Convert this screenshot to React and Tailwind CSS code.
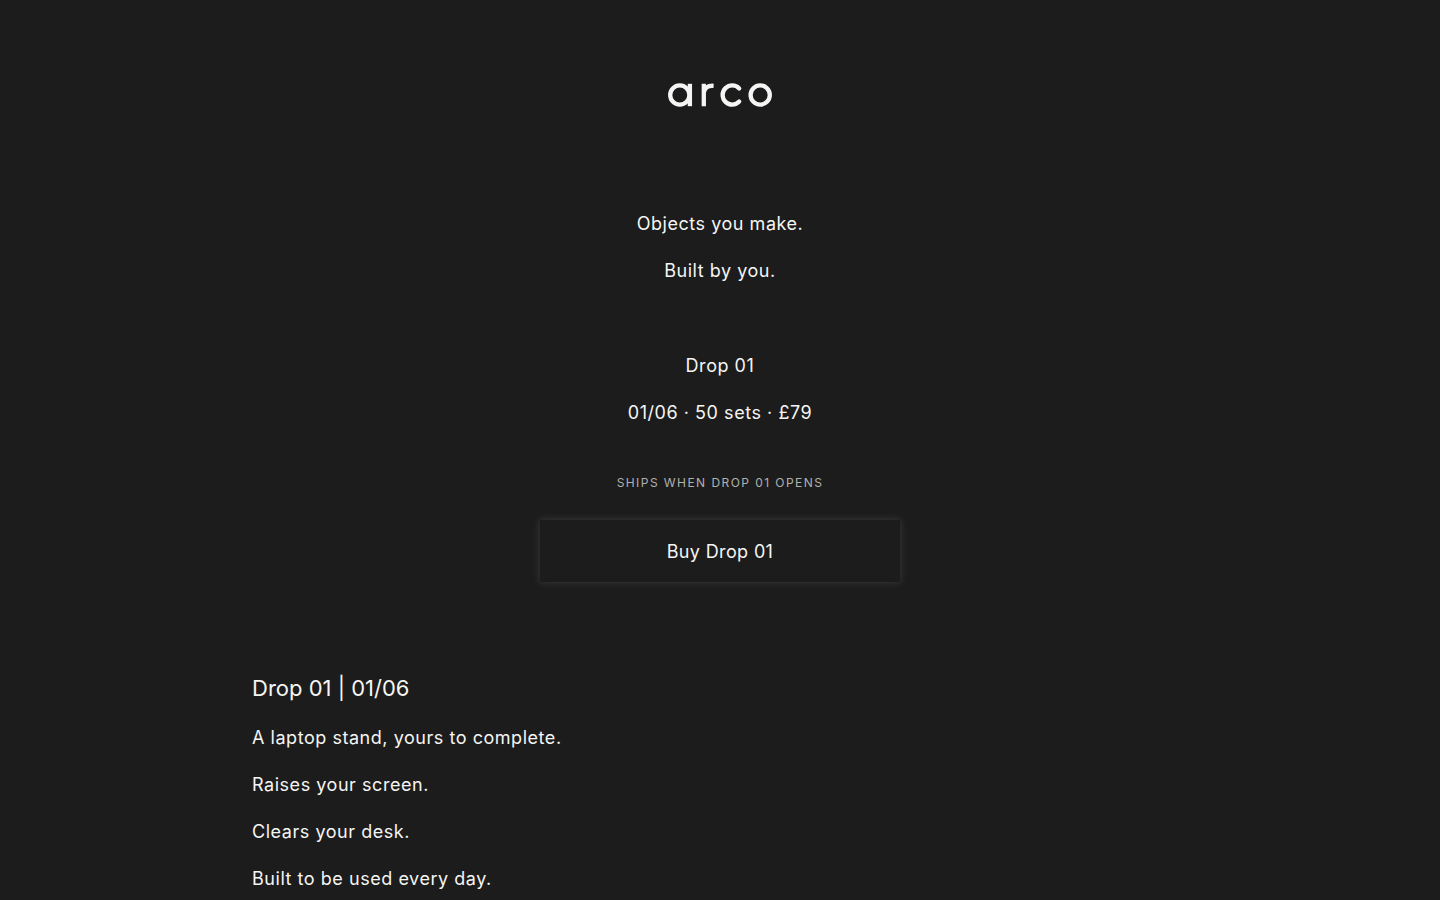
function Logo() {
  return (
    <svg
      role="img"
      aria-label="arco"
      className="h-6 w-26"
      viewBox="0 0 104 24"
      fill="none"
      stroke="currentColor"
      strokeWidth="4.3"
    >
      <circle cx="11.8" cy="12" r="9.6" />
      <path d="M21.9 .8V23.2" />
      <path d="M35.8 .8V23.2M35.8 10C36.2 5.4 39.4 2.4 45.6 2.8" />
      <path d="M71.2 5.4A9.6 9.6 0 1 0 71.2 18.6" strokeLinecap="round" />
      <circle cx="92.2" cy="12" r="9.6" />
    </svg>
  );
}

const features = [
  "A laptop stand, yours to complete.",
  "Raises your screen.",
  "Clears your desk.",
  "Built to be used every day.",
];

export default function App() {
  return (
    <div className="min-h-screen bg-[#1c1c1c] font-['Inter',sans-serif] text-lg/[29px] tracking-[0.03em] text-[#f5f5f3]">
      <header className="flex justify-center pt-[83px]">
        <Logo />
      </header>
      <main className="mx-auto max-w-[1000px] px-8">
        <section className="flex flex-col items-center pt-[102px] text-center">
          <div className="flex flex-col gap-[18px]">
            <h1>Objects you make.</h1>
            <p>Built by you.</p>
          </div>
          <div className="mt-[66px] flex flex-col gap-[18px]">
            <p>Drop 01</p>
            <p>01/06 · 50 sets · £79</p>
          </div>
          <p className="mt-[46px] text-xs/5 tracking-[0.12em] text-[#b0b0ae] uppercase">
            Ships when Drop 01 opens
          </p>
          <button
            type="button"
            className="mt-[27px] h-[62px] w-full max-w-[360px] cursor-pointer tracking-[0.02em] shadow-[0_0_8px_rgba(255,255,255,0.15)]"
          >
            Buy Drop 01
          </button>
        </section>
        <section className="pt-[92px]">
          <h2 className="text-[22px]/[29px] tracking-normal">Drop 01 | 01/06</h2>
          <div className="mt-5 flex flex-col gap-[18px]">
            {features.map((line) => (
              <p key={line}>{line}</p>
            ))}
          </div>
        </section>
      </main>
    </div>
  );
}
